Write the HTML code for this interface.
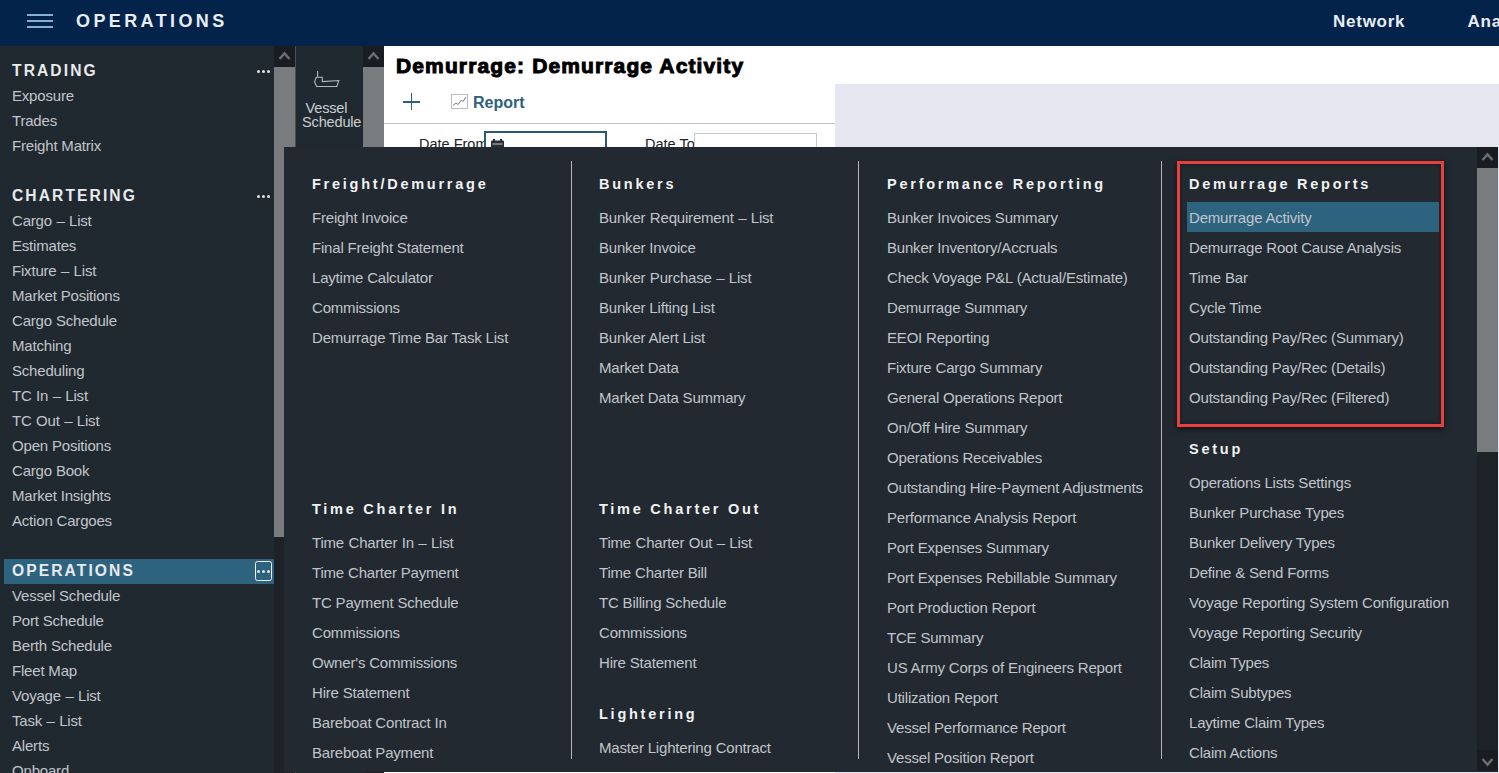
<!DOCTYPE html>
<html><head><meta charset="utf-8">
<style>
*{box-sizing:border-box;margin:0;padding:0}
html,body{width:1499px;height:773px;overflow:hidden;background:#fff;font-family:"Liberation Sans",sans-serif}
.abs{position:absolute}
#top{left:0;top:0;width:1499px;height:46px;background:#03234b}
#top .ham{left:27px;width:26px;height:1.6px;margin-top:.2px;background:#86b2d2}
#top .t{color:#e9edf2;font-weight:bold;white-space:nowrap}
#side{left:0;top:46px;width:274px;height:727px;background:#212930;overflow:hidden}
.sh{position:absolute;left:12px;font-size:15.6px;font-weight:bold;letter-spacing:2.1px;margin-top:-1px;color:#e8eaec;white-space:nowrap;line-height:25px;height:25px}
.si{position:absolute;left:12px;font-size:15px;letter-spacing:-.19px;margin-top:-.5px;color:#c1c5ca;white-space:nowrap;line-height:25px;height:25px}
.dots{position:absolute;left:257.1px;width:13px;height:3px}
.dots i{position:absolute;top:0;width:3px;height:3px;border-radius:50%;background:#e2e5e8}
.sb{background:#1c2228}
.sbtn{background:#191d23}
.thumb{background:#797c7f}
#ov{left:284px;top:147px;width:1214px;height:624.6px;background:#222930;overflow:hidden}
.oh{position:absolute;font-size:14.5px;font-weight:bold;letter-spacing:2.75px;color:#f1f2f3;white-space:nowrap;line-height:30px;height:30px}
.oi{position:absolute;font-size:15px;letter-spacing:-.19px;margin-top:-.5px;color:#c1c5ca;white-space:nowrap;line-height:30px;height:30px}
.div{position:absolute;top:14px;width:1px;height:598px;background:#b2b6ba}
.ws{word-spacing:.5px}
</style></head><body>
<div id="top" class="abs">
 <div class="abs ham" style="top:14px"></div><div class="abs ham" style="top:20px"></div><div class="abs ham" style="top:26px"></div>
 <div class="abs t" style="left:76px;top:9.5px;font-size:18px;letter-spacing:3.4px;line-height:22px">OPERATIONS</div>
 <div class="abs t" style="left:1333px;top:10.5px;font-size:17px;letter-spacing:.75px;line-height:22px">Network</div>
 <div class="abs t" style="left:1467.5px;top:10.5px;font-size:17px;letter-spacing:.75px;line-height:22px">Analytics</div>
</div>
<div id="side" class="abs">
<!--SIDE--><div class="sh" style="top:12.5px">TRADING</div><div class="dots" style="top:24px"><i style="left:0"></i><i style="left:4.8px"></i><i style="left:9.6px"></i></div>
<div class="si" style="top:37.5px">Exposure</div>
<div class="si" style="top:62.5px">Trades</div>
<div class="si" style="top:87.5px">Freight Matrix</div>
<div class="sh" style="top:137.5px">CHARTERING</div><div class="dots" style="top:149px"><i style="left:0"></i><i style="left:4.8px"></i><i style="left:9.6px"></i></div>
<div class="si ws" style="top:162.5px">Cargo – List</div>
<div class="si" style="top:187.5px">Estimates</div>
<div class="si ws" style="top:212.5px">Fixture – List</div>
<div class="si" style="top:237.5px">Market Positions</div>
<div class="si" style="top:262.5px">Cargo Schedule</div>
<div class="si" style="top:287.5px">Matching</div>
<div class="si" style="top:312.5px">Scheduling</div>
<div class="si ws" style="top:337.5px">TC In – List</div>
<div class="si ws" style="top:362.5px">TC Out – List</div>
<div class="si" style="top:387.5px">Open Positions</div>
<div class="si" style="top:412.5px">Cargo Book</div>
<div class="si" style="top:437.5px">Market Insights</div>
<div class="si" style="top:462.5px">Action Cargoes</div>
<div class="abs" style="left:4px;top:513px;width:270px;height:25px;background:#2e6380"></div><div class="abs" style="left:255px;top:515px;width:17px;height:20px;border:1px solid #eef1f3;border-radius:2.5px"></div><div class="sh" style="top:512.5px">OPERATIONS</div><div class="dots" style="top:524px"><i style="left:0"></i><i style="left:4.8px"></i><i style="left:9.6px"></i></div>
<div class="si" style="top:537.5px">Vessel Schedule</div>
<div class="si" style="top:562.5px">Port Schedule</div>
<div class="si" style="top:587.5px">Berth Schedule</div>
<div class="si" style="top:612.5px">Fleet Map</div>
<div class="si ws" style="top:637.5px">Voyage – List</div>
<div class="si ws" style="top:662.5px">Task – List</div>
<div class="si" style="top:687.5px">Alerts</div>
<div class="si" style="top:712.5px">Onboard</div><!--/SIDE-->
</div>
<!-- sidebar scrollbar -->
<div class="abs sb" style="left:274px;top:46px;width:21px;height:727px"></div>
<div class="abs sbtn" style="left:274px;top:46px;width:21px;height:21px"></div>
<div class="abs thumb" style="left:274px;top:67px;width:21px;height:470px"></div>
<svg class="abs" style="left:274px;top:46px" width="21" height="21"><path d="M5.5 13 L10.5 7.5 L15.5 13" fill="none" stroke="#696c70" stroke-width="2.6"/></svg>
<div class="abs" style="left:295px;top:46px;width:1px;height:727px;background:#4a4f55"></div>
<!-- second panel -->
<div class="abs" style="left:296px;top:46px;width:67px;height:727px;background:#212930"></div>
<svg class="abs" style="left:296px;top:60px" width="67" height="40" viewBox="296 60 67 40"><path d="M317.6 71 V77 M316.2 77.2 H322.3 V81.6 L338.8 80.5 L336.8 86.5 H316.6 L314.6 82 L316.2 77.2" fill="none" stroke="#b2b8c0" stroke-width="1.1"/></svg>
<div class="abs" style="left:305.5px;top:101px;font-size:14.6px;line-height:14px;color:#c9cdd1;letter-spacing:-.2px;white-space:nowrap">Vessel</div><div class="abs" style="left:302px;top:115px;font-size:14.6px;line-height:14px;color:#c9cdd1;letter-spacing:-.2px;white-space:nowrap">Schedule</div>
<div class="abs sb" style="left:363px;top:46px;width:21px;height:727px"></div>
<div class="abs sbtn" style="left:363px;top:46px;width:21px;height:21px"></div>
<div class="abs thumb" style="left:363px;top:67px;width:21px;height:400px"></div>
<svg class="abs" style="left:363px;top:46px" width="21" height="21"><path d="M5.5 13 L10.5 7.5 L15.5 13" fill="none" stroke="#696c70" stroke-width="2.6"/></svg>
<!-- main -->
<div class="abs" style="left:384px;top:46px;width:1115px;height:727px;background:#fff"></div>
<div class="abs" style="left:835px;top:84px;width:664px;height:689px;background:#e6e6f0"></div>
<div class="abs" style="left:396px;top:53px;font-size:21px;font-weight:bold;letter-spacing:1.13px;color:#000;-webkit-text-stroke:1px #000;white-space:nowrap;line-height:26px">Demurrage: Demurrage Activity</div>
<div class="abs" style="left:403px;top:101px;width:17px;height:1.5px;background:#2e5f7e"></div>
<div class="abs" style="left:410.7px;top:93px;width:1.5px;height:17px;background:#2e5f7e"></div>
<svg class="abs" style="left:451px;top:94px" width="17" height="15" viewBox="0 0 17 15"><rect x="0.5" y="0.5" width="16" height="14" fill="#fff" stroke="#b9bcc0"/><path d="M2 11.5 L5 9 L7 10.5 L10.5 6 L12 7.5 L15 3" fill="none" stroke="#777b80" stroke-width="1"/></svg>
<div class="abs" style="left:473px;top:93px;font-size:16px;font-weight:bold;color:#2e5f7e;line-height:20px">Report</div>
<div class="abs" style="left:384px;top:123px;width:451px;height:1px;background:#bcc7d1"></div>
<div class="abs" style="left:419px;top:135px;font-size:14.5px;color:#222;line-height:18px;white-space:nowrap">Date From</div>
<div class="abs" style="left:484px;top:131px;width:123px;height:24px;border:2px solid #2a5a75;background:#fff"></div>
<svg class="abs" style="left:490px;top:139px" width="15" height="9"><rect x="1" y="1.5" width="13" height="8" rx="1" fill="#2a2d33"/><rect x="3" y="0" width="2" height="3" fill="#2a2d33"/><rect x="10" y="0" width="2" height="3" fill="#2a2d33"/><rect x="2.5" y="4.5" width="10" height="1" fill="#c8ccd2"/></svg>
<div class="abs" style="left:645px;top:135px;font-size:14.5px;color:#222;line-height:18px;white-space:nowrap">Date To</div>
<div class="abs" style="left:694px;top:133px;width:123px;height:24px;border:1px solid #c3cad6;background:#fff"></div>
<!-- overlay -->
<div id="ov" class="abs">
<!--OV--><div class="div" style="left:287px"></div>
<div class="div" style="left:574px"></div>
<div class="div" style="left:877px"></div>
<div class="oh" style="left:28px;top:22px">Freight/Demurrage</div>
<div class="oi" style="left:28px;top:56px">Freight Invoice</div>
<div class="oi" style="left:28px;top:86px">Final Freight Statement</div>
<div class="oi" style="left:28px;top:116px">Laytime Calculator</div>
<div class="oi" style="left:28px;top:146px">Commissions</div>
<div class="oi" style="left:28px;top:176px">Demurrage Time Bar Task List</div>
<div class="oh" style="left:28px;top:347px">Time Charter In</div>
<div class="oi ws" style="left:28px;top:381px">Time Charter In – List</div>
<div class="oi" style="left:28px;top:411px">Time Charter Payment</div>
<div class="oi" style="left:28px;top:441px">TC Payment Schedule</div>
<div class="oi" style="left:28px;top:471px">Commissions</div>
<div class="oi" style="left:28px;top:501px">Owner's Commissions</div>
<div class="oi" style="left:28px;top:531px">Hire Statement</div>
<div class="oi" style="left:28px;top:561px">Bareboat Contract In</div>
<div class="oi" style="left:28px;top:591px">Bareboat Payment</div>
<div class="oh" style="left:315px;top:22px">Bunkers</div>
<div class="oi ws" style="left:315px;top:56px">Bunker Requirement – List</div>
<div class="oi" style="left:315px;top:86px">Bunker Invoice</div>
<div class="oi ws" style="left:315px;top:116px">Bunker Purchase – List</div>
<div class="oi" style="left:315px;top:146px">Bunker Lifting List</div>
<div class="oi" style="left:315px;top:176px">Bunker Alert List</div>
<div class="oi" style="left:315px;top:206px">Market Data</div>
<div class="oi" style="left:315px;top:236px">Market Data Summary</div>
<div class="oh" style="left:315px;top:347px">Time Charter Out</div>
<div class="oi ws" style="left:315px;top:381px">Time Charter Out – List</div>
<div class="oi" style="left:315px;top:411px">Time Charter Bill</div>
<div class="oi" style="left:315px;top:441px">TC Billing Schedule</div>
<div class="oi" style="left:315px;top:471px">Commissions</div>
<div class="oi" style="left:315px;top:501px">Hire Statement</div>
<div class="oh" style="left:315px;top:552px">Lightering</div>
<div class="oi" style="left:315px;top:586px">Master Lightering Contract</div>
<div class="oh" style="left:603px;top:22px">Performance Reporting</div>
<div class="oi" style="left:603px;top:56px">Bunker Invoices Summary</div>
<div class="oi" style="left:603px;top:86px">Bunker Inventory/Accruals</div>
<div class="oi" style="left:603px;top:116px">Check Voyage P&amp;L (Actual/Estimate)</div>
<div class="oi" style="left:603px;top:146px">Demurrage Summary</div>
<div class="oi" style="left:603px;top:176px">EEOI Reporting</div>
<div class="oi" style="left:603px;top:206px">Fixture Cargo Summary</div>
<div class="oi" style="left:603px;top:236px">General Operations Report</div>
<div class="oi" style="left:603px;top:266px">On/Off Hire Summary</div>
<div class="oi" style="left:603px;top:296px">Operations Receivables</div>
<div class="oi" style="left:603px;top:326px">Outstanding Hire-Payment Adjustments</div>
<div class="oi" style="left:603px;top:356px">Performance Analysis Report</div>
<div class="oi" style="left:603px;top:386px">Port Expenses Summary</div>
<div class="oi" style="left:603px;top:416px">Port Expenses Rebillable Summary</div>
<div class="oi" style="left:603px;top:446px">Port Production Report</div>
<div class="oi" style="left:603px;top:476px">TCE Summary</div>
<div class="oi" style="left:603px;top:506px">US Army Corps of Engineers Report</div>
<div class="oi" style="left:603px;top:536px">Utilization Report</div>
<div class="oi" style="left:603px;top:566px">Vessel Performance Report</div>
<div class="oi" style="left:603px;top:596px">Vessel Position Report</div>
<div class="abs" style="left:893px;top:14px;width:267px;height:266px;border:3px solid #e8413d;box-shadow:0 2px 6px rgba(0,0,0,.6), inset 0 0 4px rgba(0,0,0,.4)"></div>
<div class="abs" style="left:903px;top:55px;width:252px;height:30px;background:#2e6380"></div>
<div class="oh" style="left:905px;top:22px">Demurrage Reports</div>
<div class="oi" style="left:905px;top:56px">Demurrage Activity</div>
<div class="oi" style="left:905px;top:86px">Demurrage Root Cause Analysis</div>
<div class="oi" style="left:905px;top:116px">Time Bar</div>
<div class="oi" style="left:905px;top:146px">Cycle Time</div>
<div class="oi" style="left:905px;top:176px">Outstanding Pay/Rec (Summary)</div>
<div class="oi" style="left:905px;top:206px">Outstanding Pay/Rec (Details)</div>
<div class="oi" style="left:905px;top:236px">Outstanding Pay/Rec (Filtered)</div>
<div class="oh" style="left:905px;top:287px">Setup</div>
<div class="oi" style="left:905px;top:321px">Operations Lists Settings</div>
<div class="oi" style="left:905px;top:351px">Bunker Purchase Types</div>
<div class="oi" style="left:905px;top:381px">Bunker Delivery Types</div>
<div class="oi" style="left:905px;top:411px">Define &amp; Send Forms</div>
<div class="oi" style="left:905px;top:441px">Voyage Reporting System Configuration</div>
<div class="oi" style="left:905px;top:471px">Voyage Reporting Security</div>
<div class="oi" style="left:905px;top:501px">Claim Types</div>
<div class="oi" style="left:905px;top:531px">Claim Subtypes</div>
<div class="oi" style="left:905px;top:561px">Laytime Claim Types</div>
<div class="oi" style="left:905px;top:591px">Claim Actions</div>
<div class="abs sb" style="left:1193px;top:0;width:21px;height:624px"></div>
<div class="abs sbtn" style="left:1193px;top:0;width:21px;height:21px"></div>
<div class="abs thumb" style="left:1193px;top:21px;width:21px;height:284px"></div>
<svg class="abs" style="left:1193px;top:0" width="21" height="21"><path d="M5.5 13 L10.5 7.5 L15.5 13" fill="none" stroke="#696c70" stroke-width="2.6"/></svg>
<div class="abs sbtn" style="left:1193px;top:603px;width:21px;height:21px"></div>
<svg class="abs" style="left:1193px;top:603px" width="21" height="21"><path d="M5.5 9 L10.5 14.5 L15.5 9" fill="none" stroke="#696c70" stroke-width="2.6"/></svg><!--/OV-->
</div>
</body></html>
